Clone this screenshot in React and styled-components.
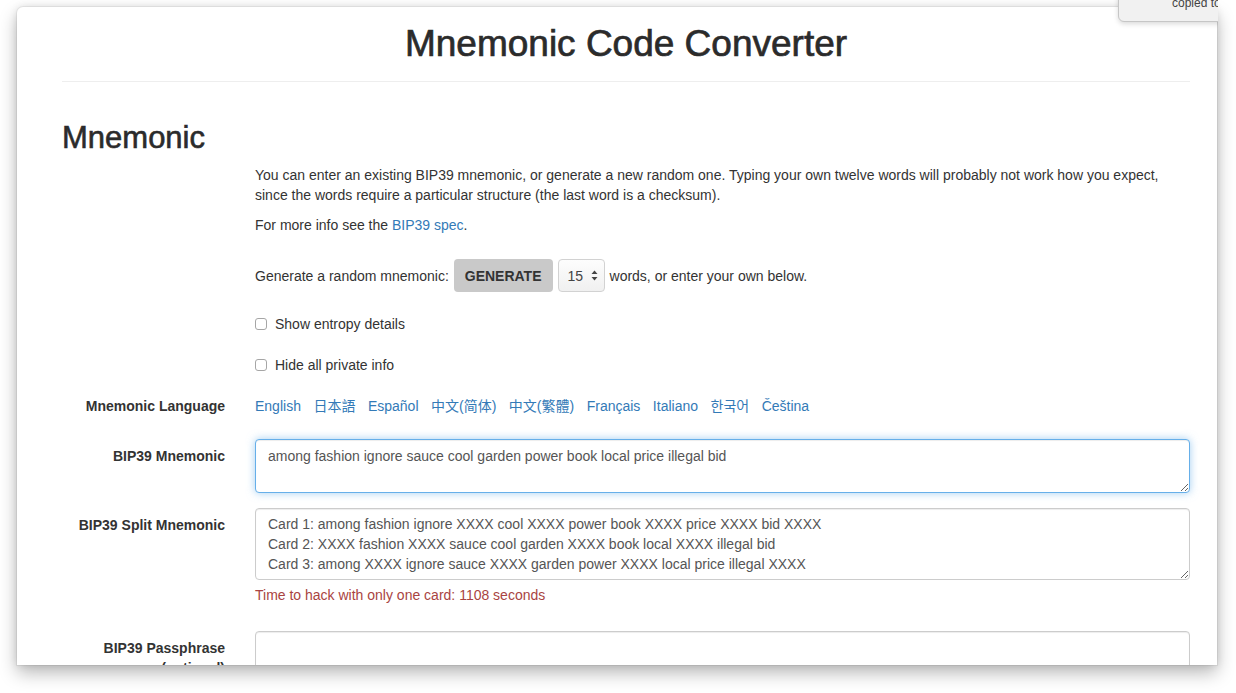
import styled, { createGlobalStyle } from 'styled-components';

const GlobalStyle = createGlobalStyle`
  html, body {
    margin: 0;
    padding: 0;
    background: #ffffff;
  }
  * {
    box-sizing: border-box;
  }
`;

const colors = {
  text: '#333333',
  muted: '#555555',
  link: '#337ab7',
  danger: '#a94442',
  rule: '#eeeeee',
  border: '#cccccc',
  focus: '#66afe9',
};

const font = `"Liberation Sans", "Noto Sans CJK SC", Arial, sans-serif`;

const languages = ['English', '日本語', 'Español', '中文(简体)', '中文(繁體)', 'Français', 'Italiano', '한국어', 'Čeština'];

const splitCards = [
  'Card 1: among fashion ignore XXXX cool XXXX power book XXXX price XXXX bid XXXX',
  'Card 2: XXXX fashion XXXX sauce cool garden XXXX book local XXXX illegal bid',
  'Card 3: among XXXX ignore sauce XXXX garden power XXXX local price illegal XXXX',
];

export default function App() {
  return (
    <>
      <GlobalStyle />
      <Stage>
        <Window>
          <Container>
            <Title>Mnemonic Code Converter</Title>
            <Rule />
            <SectionTitle>Mnemonic</SectionTitle>

            <FormRow $gap={10}>
              <Label />
              <Field>
                <Paragraph>
                  You can enter an existing BIP39 mnemonic, or generate a new random one. Typing your own twelve words will probably not work how you expect,
                  <br />
                  since the words require a particular structure (the last word is a checksum).
                </Paragraph>
              </Field>
            </FormRow>

            <FormRow $gap={24}>
              <Label />
              <Field>
                <Paragraph>
                  For more info see the <Link href="#">BIP39 spec</Link>.
                </Paragraph>
              </Field>
            </FormRow>

            <FormRow $gap={22}>
              <Label />
              <InlineField>
                <span>Generate a random mnemonic:</span>
                <GenerateBtn>GENERATE</GenerateBtn>
                <SelectBox>
                  <span>15</span>
                  <svg width="7" height="11" viewBox="0 0 7 11">
                    <path d="M3.5 0.5 L6.5 4 L0.5 4 Z" fill="#444" />
                    <path d="M3.5 10.5 L6.5 7 L0.5 7 Z" fill="#444" />
                  </svg>
                </SelectBox>
                <span>words, or enter your own below.</span>
              </InlineField>
            </FormRow>

            <FormRow $gap={21}>
              <Label />
              <CheckRow>
                <CheckBox />
                Show entropy details
              </CheckRow>
            </FormRow>

            <FormRow $gap={21}>
              <Label />
              <CheckRow>
                <CheckBox />
                Hide all private info
              </CheckRow>
            </FormRow>

            <FormRow $gap={23}>
              <Label>Mnemonic Language</Label>
              <LangList>
                {languages.map((lang) => (
                  <Link key={lang} href="#">
                    {lang}
                  </Link>
                ))}
              </LangList>
            </FormRow>

            <FormRow $gap={15}>
              <Label $top={7}>BIP39 Mnemonic</Label>
              <Field>
                <TextArea
                  $height={54}
                  $focused
                  defaultValue="among fashion ignore sauce cool garden power book local price illegal bid"
                />
              </Field>
            </FormRow>

            <FormRow $gap={26}>
              <Label $top={7}>BIP39 Split Mnemonic</Label>
              <Field>
                <TextArea $height={72} defaultValue={splitCards.join('\n')} />
                <HelpText>Time to hack with only one card: 1108 seconds</HelpText>
              </Field>
            </FormRow>

            <FormRow $gap={15}>
              <Label $top={7}>
                BIP39 Passphrase
                <br />
                (optional)
              </Label>
              <Field>
                <TextArea $height={54} />
              </Field>
            </FormRow>
          </Container>
        </Window>

        <ToastClip>
          <Toast>copied to clipboard</Toast>
        </ToastClip>
      </Stage>
    </>
  );
}

const Stage = styled.div`
  position: relative;
  width: 1236px;
  height: 693px;
  overflow: hidden;
  padding: 7px 0 0 17px;
  background: #ffffff;
  font-family: ${font};
  font-size: 14px;
  line-height: 20px;
  color: ${colors.text};
`;

const Window = styled.div`
  width: 1200px;
  height: 658px;
  overflow: hidden;
  background: #ffffff;
  border-radius: 6px 6px 0 0;
  box-shadow: 0 0 0 1px rgba(0, 0, 0, 0.05), 0 8px 18px rgba(0, 0, 0, 0.28),
    0 0 8px rgba(0, 0, 0, 0.1);
`;

const Container = styled.div`
  padding: 15px 27px 0 45px;
`;

const Title = styled.h1`
  margin: 0 0 15px;
  height: 44px;
  font-size: 37px;
  line-height: 44px;
  font-weight: 500;
  text-align: center;
  color: #2b2b2b;
  -webkit-text-stroke: 0.7px #2b2b2b;
`;

const Rule = styled.hr`
  margin: 0;
  border: 0;
  border-top: 1px solid ${colors.rule};
`;

const SectionTitle = styled.h2`
  margin: 38px 0 9px;
  font-size: 31px;
  line-height: 36px;
  font-weight: 500;
  color: #2b2b2b;
  -webkit-text-stroke: 0.6px #2b2b2b;
`;

const FormRow = styled.div`
  display: grid;
  grid-template-columns: 163px 935px;
  column-gap: 30px;
  margin-bottom: ${(p) => p.$gap || 0}px;
`;

const Label = styled.label`
  padding-top: ${(p) => p.$top || 0}px;
  text-align: right;
  font-weight: bold;
`;

const Field = styled.div`
  display: flex;
  flex-direction: column;
`;

const InlineField = styled.div`
  display: flex;
  align-items: center;
  gap: 5px;
  height: 33px;
`;

const Paragraph = styled.p`
  margin: 0;
`;

const Link = styled.a`
  color: ${colors.link};
  text-decoration: none;
`;

const GenerateBtn = styled.button`
  height: 33px;
  padding: 0 11px;
  border: 0;
  border-radius: 4px;
  background: #c9c9c9;
  color: #333;
  font-family: ${font};
  font-size: 14px;
  font-weight: bold;
  cursor: pointer;
`;

const SelectBox = styled.div`
  display: flex;
  align-items: center;
  justify-content: space-between;
  width: 47px;
  height: 33px;
  padding: 0 6px 0 9px;
  border: 1px solid #d2d2d2;
  border-radius: 4px;
  background: linear-gradient(#fdfdfd, #f0f0f0);
  color: #444;
`;

const CheckRow = styled.label`
  display: flex;
  align-items: center;
  gap: 8px;
  height: 20px;
`;

const CheckBox = styled.span`
  width: 12px;
  height: 12px;
  border: 1px solid #a6a6a6;
  border-radius: 3px;
  background: #fff;
`;

const LangList = styled.div`
  display: flex;
  gap: 12.5px;
`;

const TextArea = styled.textarea`
  display: block;
  width: 100%;
  height: ${(p) => p.$height}px;
  padding: ${(p) => (p.$height > 60 ? '5px' : '6px')} 12px;
  border: 1px solid ${(p) => (p.$focused ? colors.focus : colors.border)};
  border-radius: 4px;
  font-family: ${font};
  font-size: 14px;
  line-height: 20px;
  color: ${colors.muted};
  background: #fff;
  box-shadow: ${(p) =>
    p.$focused
      ? 'inset 0 1px 1px rgba(0,0,0,.075), 0 0 8px rgba(102,175,233,.6)'
      : 'inset 0 1px 1px rgba(0,0,0,.075)'};
  outline: none;
  resize: vertical;
`;

const HelpText = styled.span`
  margin-top: 5px;
  color: ${colors.danger};
`;

const ToastClip = styled.div`
  position: absolute;
  top: 0;
  left: 1110px;
  width: 108px;
  height: 32px;
  overflow: hidden;
`;

const Toast = styled.div`
  position: absolute;
  top: -14px;
  left: 8px;
  width: 150px;
  height: 36px;
  padding: 9px 0 0 53px;
  border: 1px solid #c6c6c6;
  border-radius: 6px;
  background: #f1f1f1;
  box-shadow: 0 2px 5px rgba(0, 0, 0, 0.15);
  font-size: 12px;
  line-height: 14px;
  color: #444;
  white-space: nowrap;
`;
